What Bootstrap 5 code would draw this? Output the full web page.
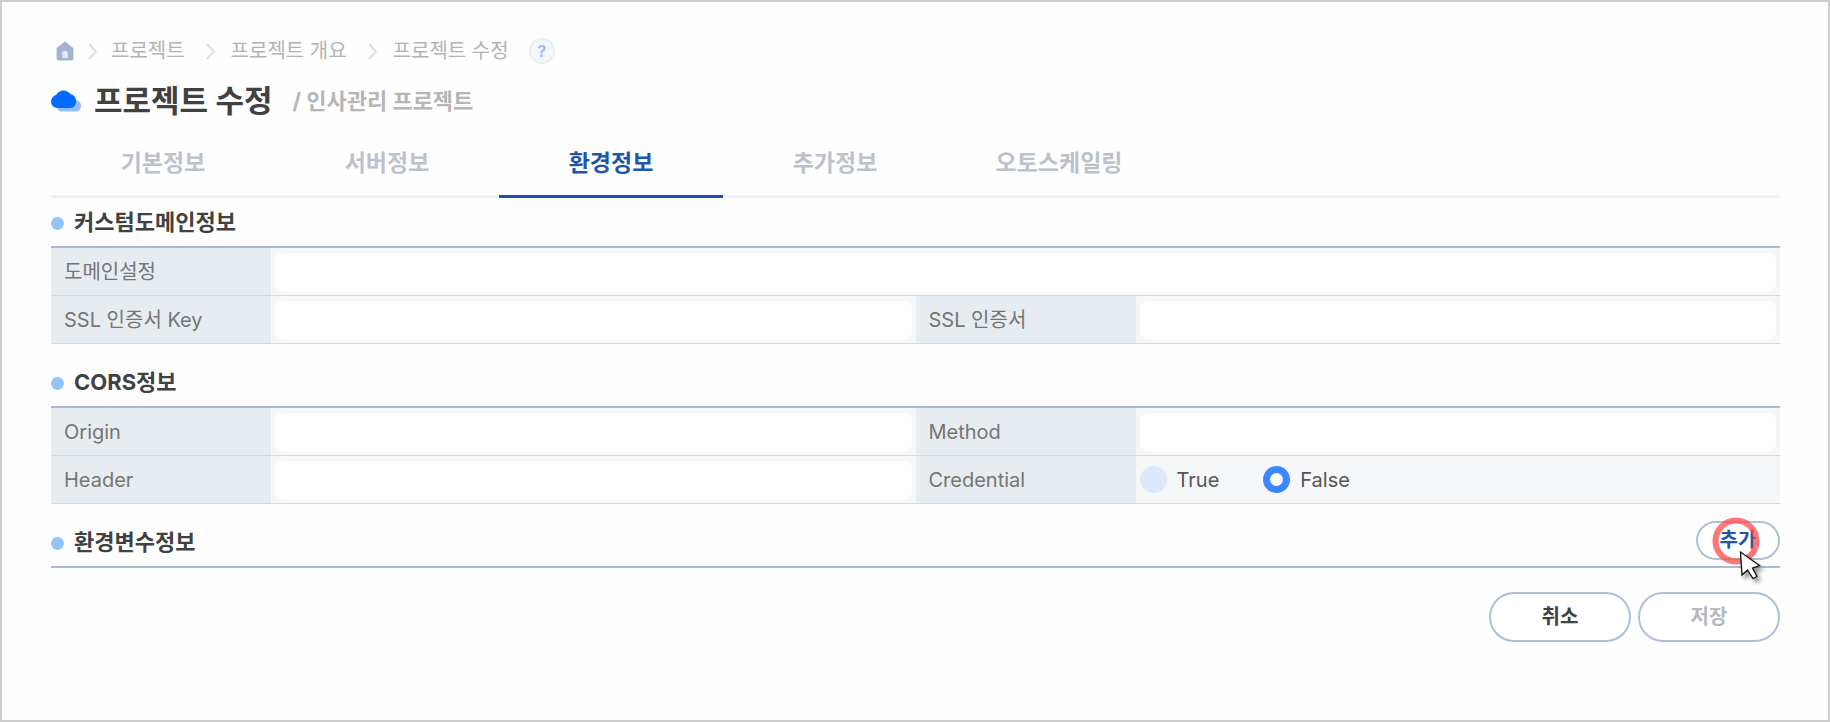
<!DOCTYPE html>
<html lang="ko">
<head>
<meta charset="utf-8">
<meta name="viewport" content="width=device-width, initial-scale=1">
<title>프로젝트 수정</title>
<link href="https://cdn.jsdelivr.net/npm/bootstrap@5.3.0/dist/css/bootstrap.min.css" rel="stylesheet">
<style>
  body { font-family: Inter, "Noto Sans CJK KR", sans-serif; font-size: 20px; line-height: 28px; color: #444; }
  a { text-decoration: none; }
  .page-frame { border: 2px solid #cdcdcd; background: #fefefe; padding: 35px 48px 40px 49px; }
  .crumbs { --bs-breadcrumb-divider: none; height: 28px; color: #aeaeb0; padding-left: 5px; }
  .crumbs a, .crumbs .current { color: #b3b3b3; }
  .crumbs .breadcrumb-item { padding: 0; display: flex; align-items: center; }
  .crumbs .breadcrumb-item::before { display: none; }
  .crumb-home { margin-right: 14px; }
  .sep { margin-right: 13px; }
  .sep-wide { margin: 0 15px 0 21px; }
  .help-btn { width: 26px; height: 26px; margin-left: 20px; border: 2px solid #e9eef4; background: #f5f7fa; color: #8fbfff; font-size: 16px; font-weight: 700; line-height: 20px; }
  .page-title { font-size: 31px; line-height: 44px; font-weight: 700; color: #414141; margin: 0 20px 0 12px; }
  .sub-title { font-size: 22px; font-weight: 700; color: #b6b6b6; }
  .title-line { height: 44px; margin-top: 14px; }
  .tabs { border-bottom: 3px solid #eff1f7; height: 61px; margin-top: 14px; }
  .tabs .nav-link { width: 224px; height: 61px; padding: 12px 0 0; text-align: center; font-size: 23px; font-weight: 700; color: #bcc2cd; border-bottom: 3px solid transparent; }
  .tabs .nav-link.active { color: #1f56ab; border-bottom-color: #1c53a9; }
  .section-head { height: 50px; border-bottom: 2px solid #a9b9d4; }
  .section-head h2 { font-size: 22px; line-height: 28px; font-weight: 700; color: #414141; margin: 0; }
  .section-head h2::before { content: ""; display: inline-block; width: 13px; height: 13px; border-radius: 50%; background: #96c2ff; margin-right: 10px; }
  .section + .section { margin-top: 14px; }
  .form-line { display: grid; grid-template-columns: 220px 1fr 220px 1fr; height: 48px; border-bottom: 1px solid #d3d9e0; background: #f5f7f9; }
  .form-line .wide { grid-column: span 3; }
  .cell-label { background: #e7ecf0; color: #757575; padding: 0 13px; display: flex; align-items: center; }
  .cell-field { padding: 4px; display: flex; align-items: center; min-width: 0; }
  .cell-field .form-control { height: 38px; border: 0; border-radius: 8px; background: #fff; font-size: 20px; }
  .choice { display: flex; align-items: center; margin: 0 44px 0 0; padding: 0; color: #555; }
  .choice .form-check-input { width: 27px; height: 27px; margin: 0 10px 0 0; border: 0; float: none; background: #dbe9ff; }
  .choice .form-check-input:checked { border: 7px solid #3a87ff; background: #fff; }
  .pill { border: 2px solid #b0bfd8; border-radius: 25px; background: #fff; font-size: 20px; font-weight: 700; line-height: 28px; padding: 0; color: #414141; }
  .pill-add { width: 84px; height: 39px; color: #1f56ab; position: relative; margin-bottom: 4px; }
  .pill-lg { width: 142px; height: 50px; }
  .pill-lg:disabled { opacity: 1; color: #b8b8b8; border-color: #b0bfd8; background: #fff; }
  .click-mark { position: absolute; left: 14px; top: -6px; pointer-events: none; overflow: visible; }
  .actions { gap: 7px; margin-top: 24px; }
</style>
</head>
<body>
<main class="page-frame min-vh-100">
  <nav aria-label="breadcrumb" class="d-flex align-items-center">
    <ol class="breadcrumb crumbs mb-0 flex-nowrap">
      <li class="breadcrumb-item"><a href="#" class="crumb-home d-flex" aria-label="홈"><svg width="18" height="20" viewBox="0 0 18 20"><path d="M9 .5 17.4 7v10.500q0 2-2 2H2.600q-2 0-2-2V7z" fill="#a2b3cf"/><path d="M6.200 17v-4.500a2.800 2.800 0 0 1 5.600 0V17z" fill="#e0e7f0"/></svg></a></li>
      <li class="breadcrumb-item"><svg class="sep" width="10" height="18" viewBox="0 0 10 18"><path d="M1 2 8 9.500 1 17" fill="none" stroke="#dcdee2" stroke-width="2"/></svg><a href="#">프로젝트</a></li>
      <li class="breadcrumb-item"><svg class="sep-wide" width="10" height="18" viewBox="0 0 10 18"><path d="M1 2 8 9.500 1 17" fill="none" stroke="#dcdee2" stroke-width="2"/></svg><a href="#">프로젝트 개요</a></li>
      <li class="breadcrumb-item"><svg class="sep-wide" width="10" height="18" viewBox="0 0 10 18"><path d="M1 2 8 9.500 1 17" fill="none" stroke="#dcdee2" stroke-width="2"/></svg><span class="current" aria-current="page">프로젝트 수정</span></li>
    </ol>
    <button type="button" class="btn rounded-circle p-0 help-btn">?</button>
  </nav>

  <div class="title-line d-flex align-items-center">
    <svg width="31" height="22" viewBox="0 0 31 22"><path d="M7 20q-2-3 2-6 2-9 9-11 6 1 7 7 5 1 5 6 0 5.500-6 5.500H11q-3 0-4-1.500z" fill="#94bfff"/><path d="M6 18q-6-1-6-7 1-5 5-6Q8 .5 12 .5q5 0 7.500 4 5.500 1 5.500 7 0 6-6 6.500z" fill="#006bff"/></svg>
    <h1 class="page-title">프로젝트 수정</h1>
    <span class="sub-title">/ 인사관리 프로젝트</span>
  </div>

  <nav class="nav tabs flex-nowrap">
    <a class="nav-link" href="#">기본정보</a>
    <a class="nav-link" href="#">서버정보</a>
    <a class="nav-link active" aria-current="page" href="#">환경정보</a>
    <a class="nav-link" href="#">추가정보</a>
    <a class="nav-link" href="#">오토스케일링</a>
  </nav>

  <form>
    <section class="section">
      <div class="section-head d-flex align-items-center"><h2>커스텀도메인정보</h2></div>
      <div class="form-line">
        <label class="cell-label" for="domain">도메인설정</label>
        <div class="cell-field wide"><input type="text" class="form-control" id="domain"></div>
      </div>
      <div class="form-line">
        <label class="cell-label" for="sslKey">SSL 인증서 Key</label>
        <div class="cell-field"><input type="text" class="form-control" id="sslKey"></div>
        <label class="cell-label" for="sslCert">SSL 인증서</label>
        <div class="cell-field"><input type="text" class="form-control" id="sslCert"></div>
      </div>
    </section>

    <section class="section">
      <div class="section-head d-flex align-items-center"><h2>CORS정보</h2></div>
      <div class="form-line">
        <label class="cell-label" for="origin">Origin</label>
        <div class="cell-field"><input type="text" class="form-control" id="origin"></div>
        <label class="cell-label" for="method">Method</label>
        <div class="cell-field"><input type="text" class="form-control" id="method"></div>
      </div>
      <div class="form-line">
        <label class="cell-label" for="header">Header</label>
        <div class="cell-field"><input type="text" class="form-control" id="header"></div>
        <span class="cell-label" id="credentialLabel">Credential</span>
        <div class="cell-field" role="radiogroup" aria-labelledby="credentialLabel">
          <div class="form-check choice"><input class="form-check-input" type="radio" name="credential" id="credTrue"><label for="credTrue">True</label></div>
          <div class="form-check choice"><input class="form-check-input" type="radio" name="credential" id="credFalse" checked><label for="credFalse">False</label></div>
        </div>
      </div>
    </section>

    <section class="section">
      <div class="section-head d-flex align-items-center justify-content-between">
        <h2>환경변수정보</h2>
        <button type="button" class="btn pill pill-add">추가
          <svg class="click-mark" width="50" height="64" viewBox="0 0 50 64">
            <defs><filter id="shade" x="-50%" y="-50%" width="220%" height="220%"><feDropShadow dx="3" dy="4" stdDeviation="2" flood-color="#000" flood-opacity=".4"/></filter></defs>
            <circle cx="24" cy="24" r="20.500" fill="none" stroke="#ff4b4b" stroke-opacity=".76" stroke-width="6"/>
            <path d="M28.500 35 30 58 35.500 53 41 61.500 45 59.500 40.500 51 47.500 48.500z" fill="#fff" stroke="#111" stroke-width="1.300" filter="url(#shade)"/>
          </svg>
        </button>
      </div>
    </section>

    <div class="actions d-flex justify-content-end">
      <button type="button" class="btn pill pill-lg">취소</button>
      <button type="submit" class="btn pill pill-lg" disabled>저장</button>
    </div>
  </form>
</main>
<script src="https://cdn.jsdelivr.net/npm/bootstrap@5.3.0/dist/js/bootstrap.bundle.min.js"></script>
</body>
</html>
